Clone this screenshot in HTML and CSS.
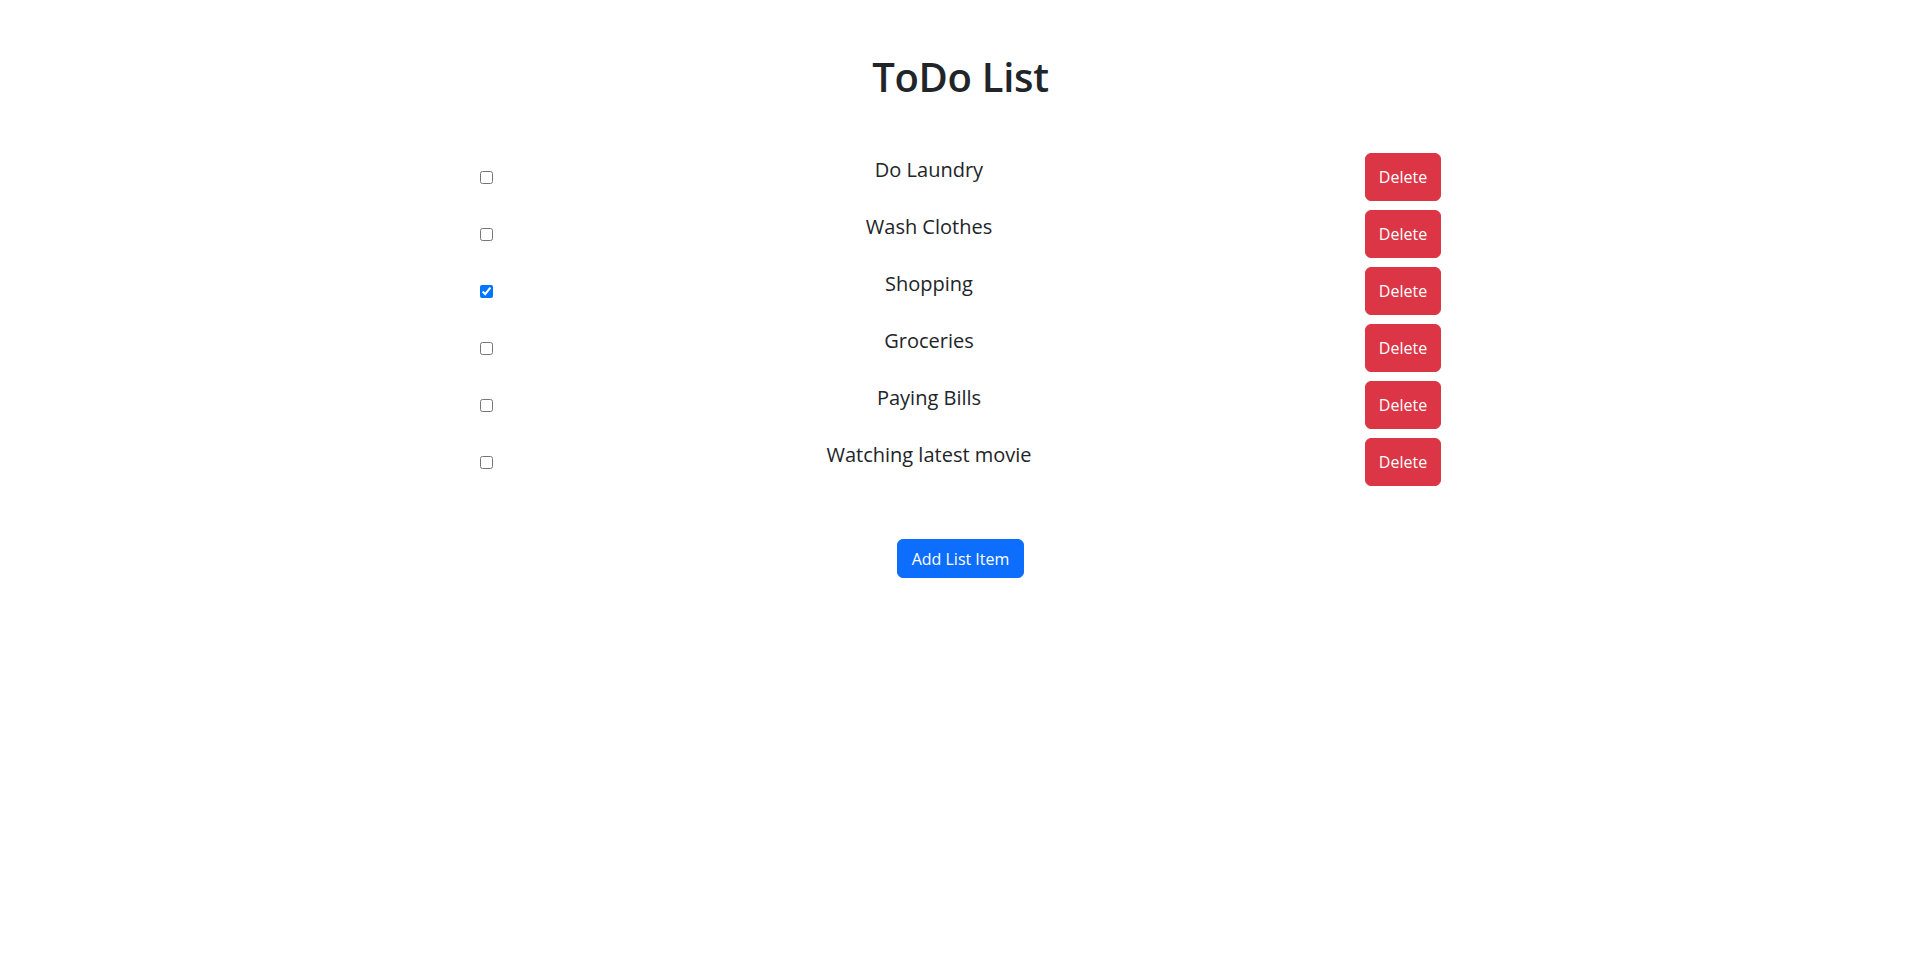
FILE: index.html
```html
<!DOCTYPE html>
<html lang="en">
<head>
<meta charset="utf-8">
<title>ToDo List</title>
<link rel="stylesheet" href="styles.css">
</head>
<body>
<main class="page">
  <h1 class="title">ToDo List</h1>
  <ul class="list">
    <li class="row"><input type="checkbox" class="check"><span class="text">Do Laundry</span><button class="btn btn-delete">Delete</button></li>
    <li class="row"><input type="checkbox" class="check"><span class="text">Wash Clothes</span><button class="btn btn-delete">Delete</button></li>
    <li class="row"><input type="checkbox" class="check" checked><span class="text">Shopping</span><button class="btn btn-delete">Delete</button></li>
    <li class="row"><input type="checkbox" class="check"><span class="text">Groceries</span><button class="btn btn-delete">Delete</button></li>
    <li class="row"><input type="checkbox" class="check"><span class="text">Paying Bills</span><button class="btn btn-delete">Delete</button></li>
    <li class="row"><input type="checkbox" class="check"><span class="text">Watching latest movie</span><button class="btn btn-delete">Delete</button></li>
  </ul>
  <div class="actions">
    <button class="btn btn-add">Add List Item</button>
  </div>
</main>
</body>
</html>
```

FILE: styles.css
```css
* { box-sizing: border-box; }
html, body { margin: 0; padding: 0; background: #fff; }
body {
  font-family: "Open Sans", "Noto Sans", sans-serif;
  color: #212529;
  font-size: 16px;
  line-height: 1.5;
}
.page {
  width: 961px;
  margin-left: calc(50% - 480px);
  padding-top: 53px;
}
.title {
  margin: 0;
  text-align: center;
  font-size: 40px;
  font-weight: 600;
  line-height: 48px;
  letter-spacing: -0.3px;
}
.list {
  list-style: none;
  margin: 52px 0 0;
  padding: 0;
  display: flex;
  flex-direction: column;
  gap: 9px;
}
.row {
  display: flex;
  height: 48px;
}
.check {
  margin: 0;
  width: 13px;
  height: 13px;
  align-self: center;
}
.text {
  flex: 1;
  text-align: center;
  font-size: 20px;
  line-height: 30px;
  padding-top: 2px;
}
.btn {
  font-family: inherit;
  border: 1px solid transparent;
  border-radius: 6px;
  color: #fff;
  font-size: 16px;
  cursor: pointer;
}
.btn-delete {
  width: 76px;
  background: #dc3545;
  border-color: #dc3545;
  padding: 0;
}
.actions {
  display: flex;
  justify-content: center;
  margin-top: 53px;
}
.btn-add {
  background: #0d6efd;
  border-color: #0d6efd;
  height: 39px;
  padding: 0 14px;
  line-height: 24px;
}
```
